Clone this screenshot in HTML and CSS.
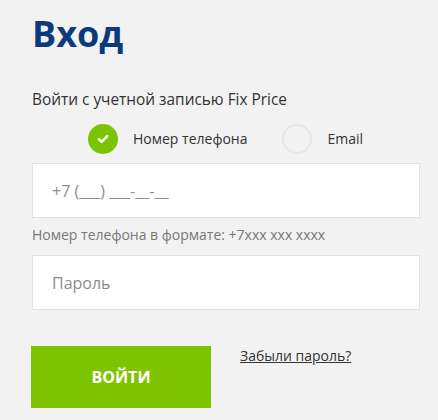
FILE: index.html
```html
<!DOCTYPE html>
<html lang="ru">
<head>
<meta charset="utf-8">
<title>Вход</title>
<link rel="stylesheet" href="styles.css">
</head>
<body>
<main class="page">
  <h1 class="title">Вход</h1>
  <p class="subtitle">Войти с учетной записью Fix Price</p>
  <div class="radios">
    <label class="radio">
      <span class="dot dot-on">
        <svg width="12" height="10" viewBox="0 0 12 10"><path d="M1.8 5.2 L4.6 7.9 L10.2 2.2" fill="none" stroke="#fff" stroke-width="2.4" stroke-linecap="round" stroke-linejoin="round"/></svg>
      </span>
      <span class="radio-label">Номер телефона</span>
    </label>
    <label class="radio">
      <span class="dot"></span>
      <span class="radio-label">Email</span>
    </label>
  </div>
  <div class="field"><span class="placeholder">+7 (___) ___-__-__</span></div>
  <p class="hint">Номер телефона в формате: +7xxx xxx xxxx</p>
  <div class="field field-pass"><span class="placeholder">Пароль</span></div>
  <div class="actions">
    <button class="btn" type="button">ВОЙТИ</button>
    <a class="forgot" href="#">Забыли пароль?</a>
  </div>
</main>
</body>
</html>
```

FILE: styles.css
```css
html, body {
  margin: 0;
  padding: 0;
  background: #f2f2f2;
}
body {
  font-family: "Open Sans", "Noto Sans", sans-serif;
  color: #333;
}
.page {
  padding: 11px 18px 0 32px;
  width: 388px;
}
.title {
  margin: 0;
  font-size: 36px;
  line-height: 46px;
  font-weight: 700;
  color: #0c3a7d;
}
.subtitle {
  margin: 32px 0 0;
  font-size: 15.4px;
  line-height: 22px;
  color: #333;
}
.radios {
  margin-top: 13px;
  padding-left: 56px;
  display: flex;
  align-items: center;
  gap: 35px;
  height: 30px;
}
.radio {
  display: flex;
  align-items: center;
  gap: 15px;
}
.dot {
  width: 30px;
  height: 30px;
  box-sizing: border-box;
  border-radius: 50%;
  border: 2px solid #e6e6e6;
  display: flex;
  align-items: center;
  justify-content: center;
}
.dot-on {
  background: #7cc400;
  border: none;
}
.radio-label {
  font-size: 14px;
  line-height: 22px;
  color: #333;
}
.field {
  margin-top: 9px;
  box-sizing: border-box;
  height: 55px;
  background: #fff;
  border: 1px solid #e2e2e2;
  padding-left: 19px;
  display: flex;
  align-items: center;
}
.field-pass {
  margin-top: 10px;
}
.placeholder {
  font-size: 16px;
  line-height: 22px;
  color: #8c8c8c;
}
.hint {
  margin: 7px 0 0;
  font-size: 14px;
  line-height: 20px;
  color: #777;
}
.actions {
  margin-top: 36px;
  display: flex;
  align-items: flex-start;
  gap: 29px;
}
.btn {
  width: 180px;
  height: 62px;
  margin-left: -1px;
  border: none;
  background: #7fc400;
  color: #fff;
  font-family: "Open Sans", "Noto Sans", sans-serif;
  font-size: 16px;
  font-weight: 700;
  padding: 0;
}
.forgot {
  font-size: 14px;
  line-height: 20px;
  color: #333;
  text-decoration: underline;
}
```
